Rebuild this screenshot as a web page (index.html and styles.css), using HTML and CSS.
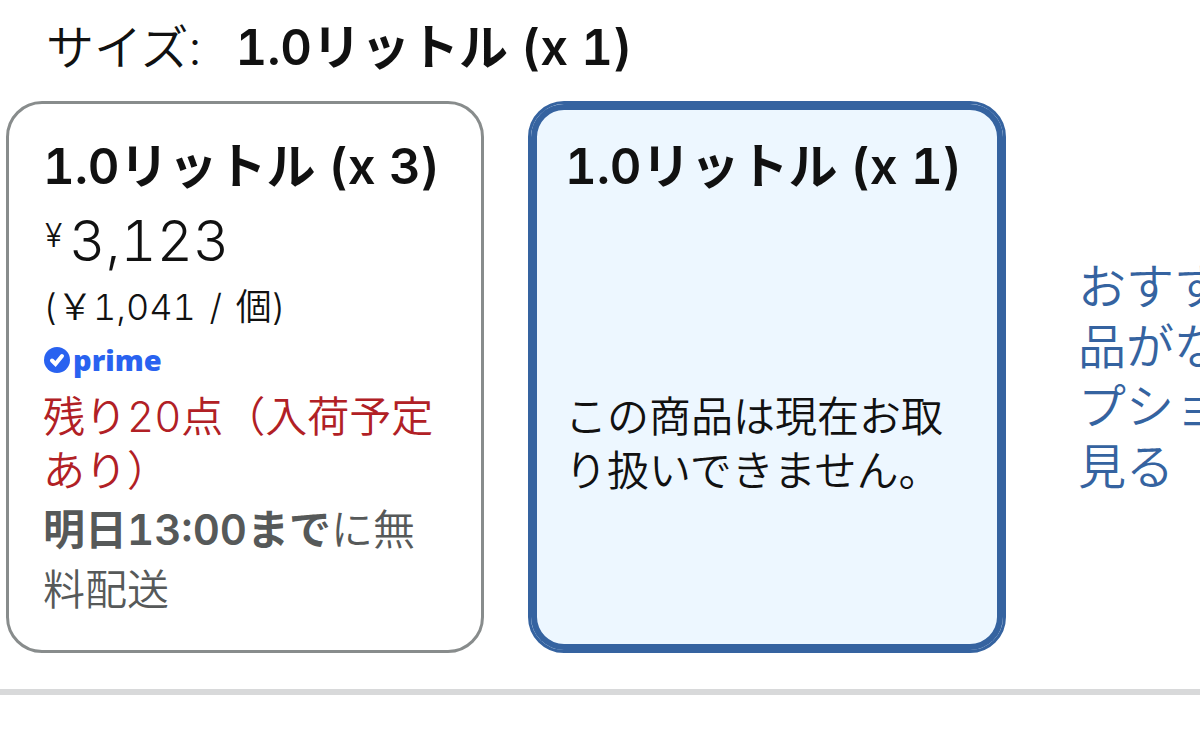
FILE: index.html
```html
<!DOCTYPE html>
<html lang="ja">

<head>
    <meta charset="UTF-8">
    <meta name="viewport" content="width=device-width, initial-scale=1.0">
    <title>サイズ</title>
    <link rel="stylesheet" href="styles.css">
</head>

<body>
    <section class="variation">
        <p class="selected">サイズ: <strong>1.0リットル (x 1)</strong></p>
        <div class="options">
            <button type="button" class="card">
                <span class="name">1.0リットル (x 3)</span>
                <span class="price"><span class="yen">¥</span>3,123</span>
                <span class="unit">(￥1,041 <span class="slash">/</span> 個)</span>
                <span class="prime">
                    <svg class="check" viewBox="0 0 26 26" aria-hidden="true">
                        <circle cx="13" cy="13" r="13" fill="#2962f0" />
                        <path d="M8 13.5l3.5 3.5 6.5-8" fill="none" stroke="#fff" stroke-width="4" stroke-linecap="round" />
                    </svg>prime</span>
                <span class="stock">残り20点（入荷予定あり）</span>
                <span class="delivery"><strong>明日13:00まで</strong>に無料配送</span>
            </button>
            <button type="button" class="card active">
                <span class="name">1.0リットル (x 1)</span>
                <span class="unavailable">この商品は現在お取り扱いできません。</span>
            </button>
            <a href="#" class="more">おすすめ商品がないオプションを見る</a>
        </div>
    </section>
</body>

</html>
```

FILE: styles.css
```css
body {
    margin: 0;
    background-color: #fff;
    color: #111;
    font-family: Inter, "Noto Sans CJK JP", sans-serif;
    font-weight: 350;
    font-variant-numeric: tabular-nums;
}

.variation {
    border-bottom: 6px solid #d8d9da;
    padding-bottom: 36px;
    overflow: hidden;
}

.selected {
    display: flex;
    gap: 34px;
    margin: 0;
    padding: 12px 46px 17px;
    font-size: 48px;
    line-height: 72px;
}

.selected strong {
    font-size: 49px;
}

strong {
    font-weight: 600;
}

.options {
    display: flex;
    gap: 44px;
    padding-left: 6px;
}

.card {
    display: flex;
    flex-direction: column;
    flex: 0 0 478px;
    box-sizing: border-box;
    padding: 27px 34px 30px;
    border: 3px solid #888c8c;
    border-radius: 36px;
    background-color: #fff;
    color: #111;
    font: inherit;
    font-variant-numeric: inherit;
    font-size: 42px;
    line-height: 54px;
    text-align: left;
}

.active {
    border-color: #3563a0;
    background-color: #edf7ff;
    box-shadow: inset 0 0 0 6px #3563a0;
}

.name {
    font-size: 49px;
    font-weight: 600;
    line-height: 72px;
    white-space: nowrap;
}

.price {
    display: flex;
    font-size: 56px;
    line-height: 76px;
}

.yen {
    margin: 0 7px 0 2px;
    font-size: 32px;
    line-height: 66px;
}

.unit {
    margin-top: 2px;
    font-size: 36px;
    line-height: 52px;
}

.slash {
    margin: 0 4px;
}

.prime {
    display: flex;
    align-items: center;
    color: #2962f0;
    font-family: "Open Sans", sans-serif;
    font-size: 29px;
    font-weight: 800;
}

.check {
    width: 26px;
    height: 26px;
    margin: 0 3px 0 1px;
}

.stock {
    margin-top: 3px;
    color: #b12025;
}

.delivery {
    margin-top: 2px;
    color: #565959;
    line-height: 60px;
}

.unavailable {
    margin-top: 187px;
}

.more {
    flex: 0 0 240px;
    align-self: center;
    margin-left: 28px;
    color: #3563a0;
    font-size: 48px;
    line-height: 60px;
    text-decoration: none;
}
```
